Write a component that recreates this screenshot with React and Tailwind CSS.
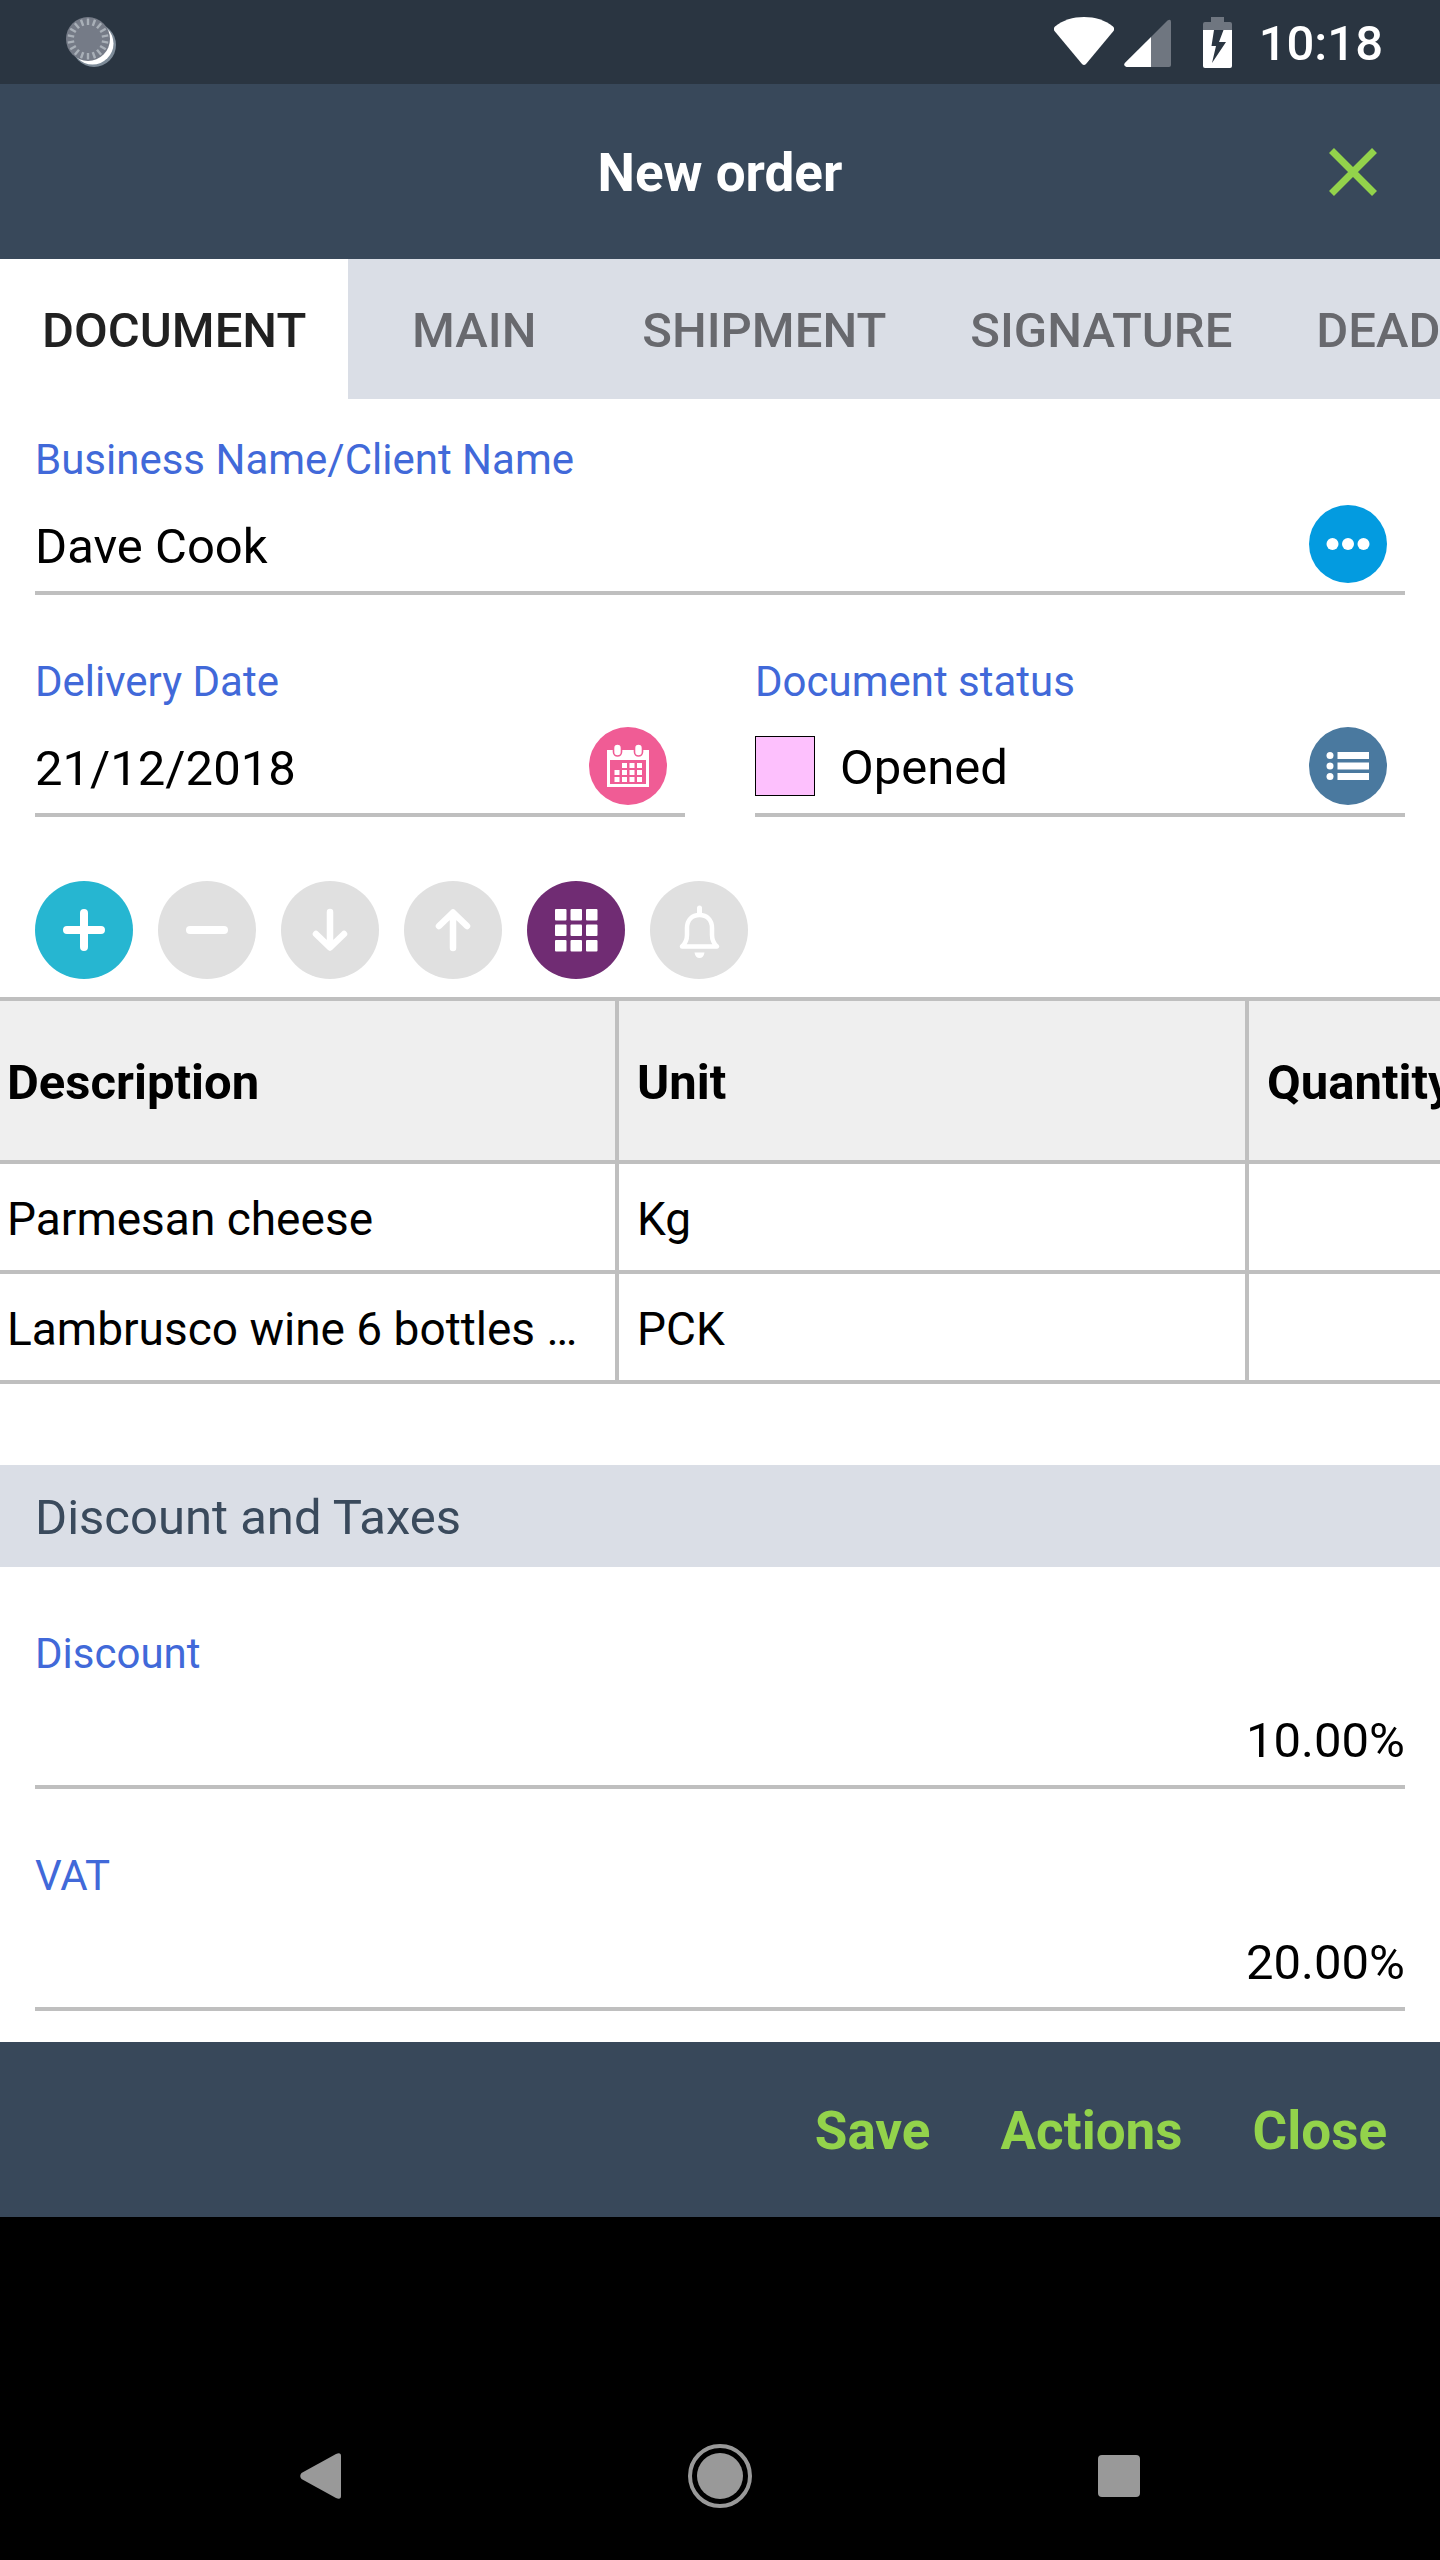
import React, { useState } from 'react';

const TABS = ['Document', 'Main', 'Shipment', 'Signature', 'Deadlines'];

const LINES = [
  { description: 'Parmesan cheese', unit: 'Kg' },
  { description: 'Lambrusco wine 6 bottles …', unit: 'PCK' },
];

const TICKS = Array.from({ length: 18 }, (_, i) => i * 20);

const SyncIcon = () => (
  <svg className="w-[50px] h-[50px]" viewBox="0 0 50 50" aria-hidden="true">
    <circle cx="28" cy="28" r="22" fill="#7d8b98" />
    <circle cx="26.5" cy="26.5" r="21" fill="#fff" />
    <circle cx="22" cy="22" r="22" fill="#757b87" />
    {TICKS.map((angle) => (
      <path key={angle} d="M22 1.5V8" stroke="#a9b0b8" strokeWidth="2.4" transform={`rotate(${angle} 22 22)`} />
    ))}
  </svg>
);

const WifiIcon = () => (
  <svg className="w-[60px] h-[50px]" viewBox="0 0 60 50" fill="#fff" aria-hidden="true">
    <path d="M1 9.500C9 3 19 0 30 0S51 3 59 9.500Q61 11.500 59.500 14L32 47Q30 49 28 47L.5 14Q-1 11.500 1 9.500Z" />
  </svg>
);

const SignalIcon = () => (
  <svg className="w-[48px] h-[50px]" viewBox="0 0 48 50" aria-hidden="true">
    <path d="M27 20L43.500 3.500Q47 1.500 47 5V48Q47 50 45 50H27Z" fill="#6f7680" />
    <path d="M27 20V50H2.500Q-1 49 .8 46Z" fill="#fff" />
  </svg>
);

const BatteryIcon = () => (
  <svg className="w-[30px] h-[51px]" viewBox="0 0 30 51" aria-hidden="true">
    <path d="M8 0H21V5H27Q29 5 29 7V13H0V7Q0 5 2 5H8Z" fill="#6f7680" />
    <path d="M0 13H29V49Q29 51 27 51H2Q0 51 0 49Z" fill="#fff" />
    <path d="M11 13H20.500L16 25H23L9 46L13 29H8.500Z" fill="#2a3541" />
  </svg>
);

const CloseIcon = () => (
  <svg className="w-12 h-12" viewBox="0 0 48 48" stroke="#93d34b" strokeWidth="7" aria-hidden="true">
    <path d="M2.500 2.500L45.500 45.500M45.500 2.500L2.500 45.500" />
  </svg>
);

const MoreIcon = () => (
  <svg className="w-full h-full" viewBox="0 0 78 78" fill="#fff" aria-hidden="true">
    <circle cx="23.500" cy="39" r="6" />
    <circle cx="39" cy="39" r="6" />
    <circle cx="54.500" cy="39" r="6" />
  </svg>
);

const CalendarIcon = () => (
  <svg className="w-full h-full" viewBox="0 0 78 78" aria-hidden="true">
    <path d="M18 23H60V60H18Z" fill="#fff" />
    <path d="M21 33H57V57H21Z" fill="#f05c95" />
    <g fill="#fff" stroke="#f05c95" strokeWidth="1.600">
      <rect x="24.500" y="17" width="8" height="12" rx="4" />
      <rect x="45.500" y="17" width="8" height="12" rx="4" />
    </g>
    <path
      d="M35.500 36V41M43 36V41M50.500 36V41M28 43V48M35.500 43V48M43 43V48M50.500 43V48M28 50V55M35.500 50V55M43 50V55M50.500 50V55"
      stroke="#fff"
      strokeWidth="5"
    />
  </svg>
);

const ListIcon = () => (
  <svg className="w-full h-full" viewBox="0 0 78 78" fill="#fff" aria-hidden="true">
    <circle cx="21" cy="28.500" r="3.500" />
    <circle cx="21" cy="39" r="3.500" />
    <circle cx="21" cy="49.500" r="3.500" />
    <path d="M28.500 25H60V32H28.500ZM28.500 35.500H60V42.500H28.500ZM28.500 46H60V53H28.500Z" />
  </svg>
);

// All toolbar glyphs share a 98px box
const ToolGlyph = ({ children }) => (
  <svg
    className="w-full h-full"
    viewBox="0 0 98 98"
    fill="none"
    stroke="#fff"
    strokeWidth="8"
    strokeLinecap="round"
    strokeLinejoin="round"
    aria-hidden="true"
  >
    {children}
  </svg>
);

const TOOLS = [
  { label: 'Add line', color: 'bg-[#26b6d1]', glyph: <path d="M49 32V66M32 49H66" /> },
  { label: 'Remove line', color: 'bg-[#e0e0e0]', glyph: <path d="M32 49H66" /> },
  { label: 'Move down', color: 'bg-[#e0e0e0]', glyph: <path d="M49 31V65M35 53L49 66.500L63 53" strokeWidth="6.500" /> },
  { label: 'Move up', color: 'bg-[#e0e0e0]', glyph: <path d="M49 67V33M35 45L49 31.500L63 45" strokeWidth="6.500" /> },
  {
    label: 'Catalogue',
    color: 'bg-[#702c73]',
    glyph: (
      <g fill="#fff" stroke="none">
        {[28, 43.5, 59].map((y) =>
          [28, 43.5, 59].map((x) => <rect key={`${x}-${y}`} x={x} y={y} width="11.500" height="11.500" rx="1" />)
        )}
      </g>
    ),
  },
  {
    label: 'Reminder',
    color: 'bg-[#e0e0e0]',
    glyph: (
      <g>
        <path d="M49.500 27V32" strokeWidth="5" />
        <path d="M32 65.500Q37 61 37 54V47C37 39 42 34 49.500 34S62 39 62 47V54Q62 61 67 65.500Z" strokeWidth="4.500" />
        <path d="M44.500 71.500H54.500Q53.500 77 49.500 77T44.500 71.500Z" fill="#fff" stroke="none" />
      </g>
    ),
  },
];

const RoundButton = ({ label, color, children }) => (
  <button type="button" aria-label={label} className={`w-[78px] h-[78px] shrink-0 rounded-full ${color}`}>
    {children}
  </button>
);

const Field = ({ id, label, children }) => (
  <div className="min-w-0">
    <label htmlFor={id} className="block text-[42px] leading-[50px] text-[#4169d9]">
      {label}
    </label>
    <div className="mt-3 h-[98px] flex items-center border-b-4 border-[#bfbfbf]">{children}</div>
  </div>
);

const inputClass = 'flex-1 min-w-0 h-full p-0 pt-1 bg-transparent text-[49px] text-black outline-none';

const App = () => {
  const [activeTab, setActiveTab] = useState('Document');
  const [client, setClient] = useState('Dave Cook');
  const [date, setDate] = useState('21/12/2018');
  const [status, setStatus] = useState('Opened');
  const [discount, setDiscount] = useState('10.00%');
  const [vat, setVat] = useState('20.00%');

  return (
    <div className="min-h-screen flex flex-col bg-black overflow-x-hidden font-[Roboto,sans-serif]">
      {/* Status bar */}
      <div className="h-[84px] pl-[66px] pr-[57px] flex items-center bg-[#2a3541]">
        <SyncIcon />
        <div className="ml-auto flex items-center">
          <WifiIcon />
          <div className="ml-[10px]">
            <SignalIcon />
          </div>
          <div className="ml-[31px]">
            <BatteryIcon />
          </div>
          <span className="ml-[26px] pt-1 text-[49px] leading-[58px] font-medium text-white">10:18</span>
        </div>
      </div>

      <header className="h-[175px] px-[63px] grid grid-cols-[48px_1fr_48px] items-center bg-[#38485a]">
        <h1 className="col-start-2 pt-1 text-center text-[53px] font-bold text-white">New order</h1>
        <button type="button" aria-label="Close order">
          <CloseIcon />
        </button>
      </header>

      <nav className="flex overflow-hidden bg-[#dadee6]">
        {TABS.map((tab) => (
          <button
            key={tab}
            type="button"
            onClick={() => setActiveTab(tab)}
            className={`h-[140px] min-w-[252px] shrink-0 px-[42px] pt-1 text-[49px] font-medium uppercase ${
              tab === activeTab ? 'bg-white text-[#212121]' : 'text-[#68696e]'
            }`}
          >
            {tab}
          </button>
        ))}
      </nav>

      <main className="bg-white pb-[31px]">
        <div className="px-[35px] pt-9 flex flex-col gap-[62px]">
          <Field id="client" label="Business Name/Client Name">
            <input id="client" className={inputClass} value={client} onChange={(e) => setClient(e.target.value)} />
            <div className="mr-[18px] flex">
              <RoundButton label="Choose client" color="bg-[#039be0]">
                <MoreIcon />
              </RoundButton>
            </div>
          </Field>

          <div className="grid grid-cols-2 gap-[70px]">
            <Field id="date" label="Delivery Date">
              <input id="date" className={inputClass} value={date} onChange={(e) => setDate(e.target.value)} />
              <div className="mr-[18px] flex">
                <RoundButton label="Choose date" color="bg-[#f05c95]">
                  <CalendarIcon />
                </RoundButton>
              </div>
            </Field>
            <Field id="status" label="Document status">
              <span className="w-[60px] h-[60px] mr-[25px] shrink-0 border border-black bg-[#fdc0fd]" />
              <select
                id="status"
                className={`${inputClass} appearance-none`}
                value={status}
                onChange={(e) => setStatus(e.target.value)}
              >
                <option>Opened</option>
              </select>
              <div className="mr-[18px] flex">
                <RoundButton label="Choose status" color="bg-[#4a799f]">
                  <ListIcon />
                </RoundButton>
              </div>
            </Field>
          </div>
        </div>

        <div className="mt-16 px-[35px] flex gap-[25px]">
          {TOOLS.map((tool) => (
            <button
              key={tool.label}
              type="button"
              aria-label={tool.label}
              className={`w-[98px] h-[98px] rounded-full ${tool.color}`}
            >
              <ToolGlyph>{tool.glyph}</ToolGlyph>
            </button>
          ))}
        </div>

        {/* Order lines, wider than the screen */}
        <div className="mt-[18px] overflow-hidden border-t-4 border-[#bfbfbf]">
          <table className="w-[1879px] table-fixed border-separate border-spacing-0 text-left text-black">
            <thead>
              <tr className="h-[163px] bg-[#efefef] text-[49px]">
                <th className="w-[619px] pl-[7px] pt-1 border-r-4 border-b-4 border-[#bfbfbf] font-bold">Description</th>
                <th className="w-[630px] pl-[18px] pt-1 border-r-4 border-b-4 border-[#bfbfbf] font-bold">Unit</th>
                <th className="w-[630px] pl-[18px] pt-1 border-b-4 border-[#bfbfbf] font-bold">Quantity</th>
              </tr>
            </thead>
            <tbody>
              {LINES.map((line) => (
                <tr key={line.unit} className="h-[110px] text-[46px] leading-[54px]">
                  <td className="pl-[7px] pt-1 border-r-4 border-b-4 border-[#bfbfbf] truncate">{line.description}</td>
                  <td className="pl-[18px] pt-1 border-r-4 border-b-4 border-[#bfbfbf]">{line.unit}</td>
                  <td className="border-b-4 border-[#bfbfbf]" />
                </tr>
              ))}
            </tbody>
          </table>
        </div>

        <h2 className="mt-[81px] h-[102px] px-[35px] pt-1 flex items-center bg-[#dadee6] text-[49px] text-[#3a4a5c]">
          Discount and Taxes
        </h2>

        <div className="px-[35px] pt-[62px] flex flex-col gap-[62px]">
          <Field id="discount" label="Discount">
            <input
              id="discount"
              className={`${inputClass} text-right`}
              value={discount}
              onChange={(e) => setDiscount(e.target.value)}
            />
          </Field>
          <Field id="vat" label="VAT">
            <input id="vat" className={`${inputClass} text-right`} value={vat} onChange={(e) => setVat(e.target.value)} />
          </Field>
        </div>
      </main>

      <footer className="h-[175px] px-[53px] pt-1 flex items-center justify-end gap-[70px] bg-[#38485a] text-[53px] font-bold text-[#93d34b]">
        <button type="button">Save</button>
        <button type="button">Actions</button>
        <button type="button">Close</button>
      </footer>

      {/* System navigation */}
      <div className="mt-auto h-[168px] px-[122px] grid grid-cols-3 items-center justify-items-center">
        <button type="button" aria-label="Back">
          <svg className="w-[42px] h-[46px]" viewBox="0 0 42 46" fill="#999">
            <path d="M1.500 20L36 1Q41 -1 41 3V43Q41 47 36 45L1.500 26Q-1 23 1.500 20Z" />
          </svg>
        </button>
        <button type="button" aria-label="Home">
          <svg className="w-16 h-16" viewBox="0 0 64 64">
            <circle cx="32" cy="32" r="30" fill="none" stroke="#999" strokeWidth="4" />
            <circle cx="32" cy="32" r="23" fill="#999" />
          </svg>
        </button>
        <button type="button" aria-label="Recent apps" className="w-[42px] h-[42px] rounded bg-[#999]" />
      </div>
    </div>
  );
};

export default App;
